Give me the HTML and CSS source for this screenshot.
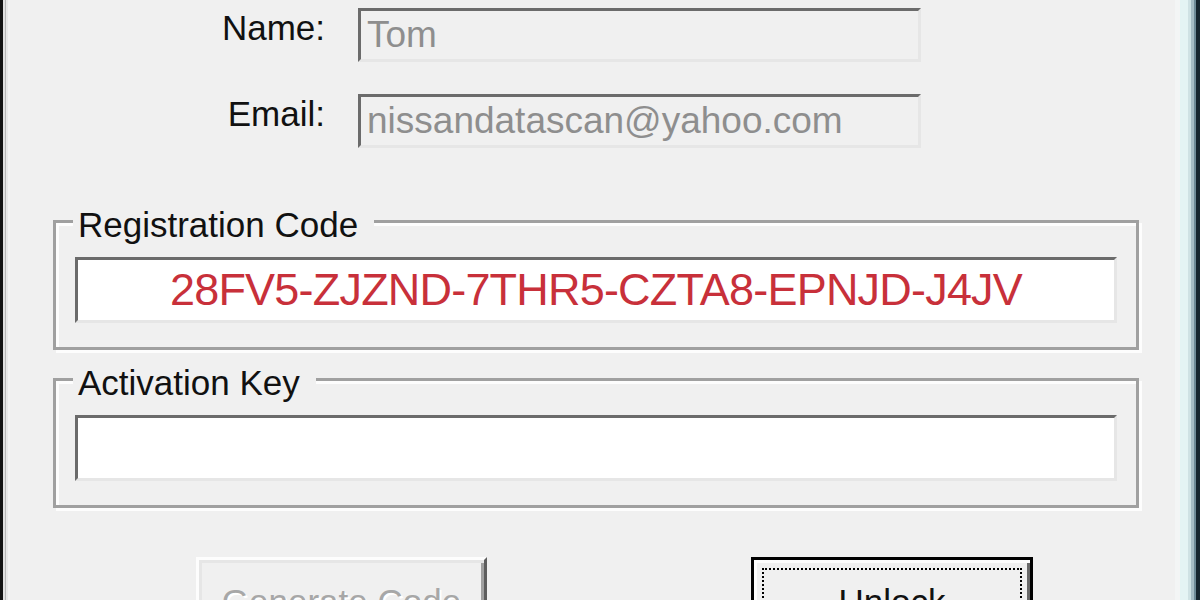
FILE: index.html
```html
<!DOCTYPE html>
<html lang="en">
<head>
<meta charset="utf-8">
<title>Registration</title>
<link rel="stylesheet" href="styles.css">
</head>
<body>
<div class="window">
  <div class="frame-left"></div>
  <div class="client">
    <div class="fields">
      <div class="label">Name:</div>
      <div class="edit disabled">Tom</div>
      <div class="label">Email:</div>
      <div class="edit disabled">nissandatascan@yahoo.com</div>
    </div>

    <div class="group group-first">
      <div class="legend">Registration Code</div>
      <div class="edit code">28FV5-ZJZND-7THR5-CZTA8-EPNJD-J4JV</div>
    </div>

    <div class="group group-second">
      <div class="legend">Activation Key</div>
      <div class="edit code"></div>
    </div>

    <div class="buttons">
      <button class="btn btn-disabled" type="button" disabled><span class="focus">Generate Code</span></button>
      <button class="btn btn-default" type="button"><span class="focus">Unlock</span></button>
    </div>
  </div>
  <div class="frame-right"></div>
</div>
</body>
</html>
```
FILE: styles.css
```css
html, body {
  margin: 0;
  padding: 0;
}

body {
  width: 1200px;
  height: 600px;
  overflow: hidden;
  background: #f0f0f0;
  font-family: "Liberation Sans", Arial, sans-serif;
}

.window {
  display: flex;
  height: 600px;
}

.frame-left {
  flex: none;
  width: 10px;
  background: linear-gradient(to right,
    #141414 0 3px,
    #e2e2e2 3px 5px,
    #b8b8b8 5px 6px,
    #e9e9e9 6px 8px,
    #f4f4f4 8px 10px);
}

.frame-right {
  flex: none;
  width: 25px;
  background: linear-gradient(to right,
    #f3f5f5 0 5px,
    #e4f4f4 5px 13px,
    #cfe2e4 13px 16px,
    #a6bcc4 16px 19px,
    #6e8a96 19px 21px,
    #16252e 21px 25px);
}

.client {
  flex: 1;
  min-width: 0;
  padding-top: 8px;
  overflow: hidden;
}

/* name / email rows */
.fields {
  display: grid;
  grid-template-columns: 315px 563px;
  column-gap: 33px;
  row-gap: 32px;
}

.label {
  font-size: 35px;
  line-height: 40px;
  text-align: right;
  color: #111;
}

.edit {
  box-sizing: border-box;
  border-style: solid;
  border-width: 3px;
  border-color: #6b6b6b #e6e6e6 #e6e6e6 #6b6b6b;
  white-space: nowrap;
  overflow: hidden;
}

.edit.disabled {
  height: 54px;
  background: #f0f0f0;
  color: #8e8e8e;
  font-size: 37px;
  line-height: 48px;
  padding-left: 6px;
}

/* group boxes */
.group {
  box-sizing: border-box;
  width: 1086px;
  height: 130px;
  margin-left: 43px;
  border: 3px solid #a0a0a0;
  box-shadow: inset 3px 3px 0 #fdfdfd, 3px 3px 0 #fdfdfd;
}

.group-first {
  margin-top: 72px;
}

.group-second {
  margin-top: 28px;
}

.legend {
  width: max-content;
  margin: -18px 0 0 17px;
  padding: 0 16px 0 5px;
  background: #f0f0f0;
  font-size: 35px;
  line-height: 40px;
  color: #111;
}

.edit.code {
  height: 66px;
  margin: 12px 19px 0;
  background: #fff;
  color: #c8303a;
  font-size: 45px;
  line-height: 60px;
  letter-spacing: -0.8px;
  text-align: center;
}

/* buttons */
.buttons {
  display: flex;
  gap: 264px;
  padding-left: 186px;
  margin-top: 49px;
}

.btn {
  appearance: none;
  box-sizing: border-box;
  flex: none;
  height: 80px;
  margin: 0;
  padding: 8px;
  border: 3px solid;
  background: #f0f0f0;
  font-family: "Liberation Sans", Arial, sans-serif;
  font-size: 35px;
  text-align: center;
}

.btn-disabled {
  width: 291px;
  border-color: #fdfdfd #5e5e5e #5e5e5e #fdfdfd;
  box-shadow: inset 3px 3px 0 #e6e6e6, inset -3px -3px 0 #a0a0a0;
  color: #a7a7a7;
  text-shadow: 2px 2px 0 #ffffff;
}

.btn-default {
  width: 282px;
  border-color: #000;
  box-shadow: inset 3px 3px 0 #fdfdfd, inset -3px -3px 0 #696969;
  color: #111;
}

.focus {
  display: block;
  box-sizing: border-box;
  height: 100%;
  border: 2px dotted transparent;
  line-height: 63px;
}

.btn-default .focus {
  border-color: #000;
}
```
